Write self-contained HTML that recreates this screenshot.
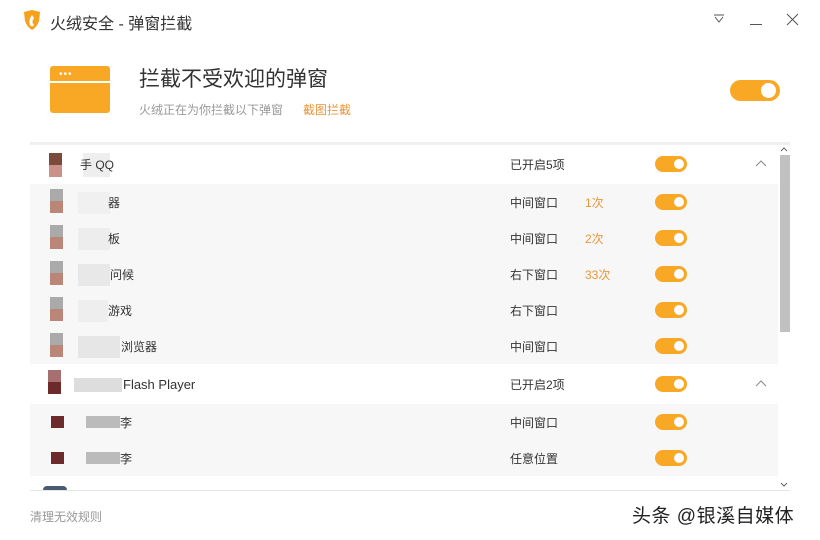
<!DOCTYPE html>
<html><head><meta charset="utf-8"><style>
*{margin:0;padding:0;box-sizing:border-box}
body{width:820px;height:540px;background:#fff;font-family:"Liberation Sans","Noto Sans CJK SC",sans-serif;position:relative;overflow:hidden;color:#333}
.a{position:absolute}
.tg{position:absolute;left:655px;width:32px;height:16px;border-radius:8px;background:#f9a825}
.tg::after{content:"";position:absolute;right:3px;top:3px;width:10px;height:10px;border-radius:50%;background:#fff}
.row{position:absolute;left:30px;width:748px;height:36px}
.sub{background:#f7f7f7}
.t{position:absolute;font-size:12px;line-height:14px}
.c{color:#e8963a}
.px{position:absolute;width:13px;height:12px}
</style></head><body>
<svg class="a" style="left:22px;top:9px" width="20" height="22" viewBox="0 0 20 22"><path d="M2 3 L10 1 L18 3 L17 12 Q15 18 10 21 Q5 18 3 12 Z" fill="#f7a01a"/><path d="M10 6 Q6 11 8 16 Q10 19 12 16 Q9 13 12 9 Z" fill="#fff"/></svg>
<div class="a" style="left:50px;top:10px;font-size:16px;color:#333">火绒安全 - 弹窗拦截</div>
<svg class="a" style="left:712px;top:12px" width="14" height="12"><path d="M2 3h10M3 5l4 5 4-5" stroke="#555" fill="none"/></svg>
<div class="a" style="left:750px;top:24px;width:12px;height:1px;background:#555"></div>
<svg class="a" style="left:786px;top:13px" width="13" height="13"><path d="M1 1l11 11M12 1L1 12" stroke="#555"/></svg>
<div class="a" style="left:50px;top:66px;width:60px;height:47px;background:#f9a825;border-radius:3px"></div>
<div class="a" style="left:50px;top:81px;width:60px;height:2px;background:#fff"></div>
<div class="a" style="left:59px;top:72px;color:#fff;font-size:10px;letter-spacing:1px;line-height:6px">•••</div>
<div class="a" style="left:139px;top:63px;font-size:21px;color:#333">拦截不受欢迎的弹窗</div>
<div class="a" style="left:139px;top:101px;font-size:12px;color:#999">火绒正在为你拦截以下弹窗</div>
<div class="a" style="left:303px;top:101px;font-size:12px;color:#e8963a">截图拦截</div>
<div class="a" style="left:730px;top:80px;width:50px;height:21px;border-radius:11px;background:#f9a825"></div>
<div class="a" style="left:761px;top:83px;width:15px;height:15px;border-radius:50%;background:#fff"></div>
<div class="a" style="left:30px;top:142px;width:760px;height:3px;background:#efefef"></div>

<div class="row" style="top:146px"></div>
<div class="row sub" style="top:184px"></div>
<div class="row sub" style="top:220px"></div>
<div class="row sub" style="top:256px"></div>
<div class="row sub" style="top:292px"></div>
<div class="row sub" style="top:328px"></div>
<div class="row sub" style="top:404px"></div>
<div class="row sub" style="top:440px"></div>
<div class="a" style="left:30px;top:490px;width:760px;height:1px;background:#e6e6e6"></div>

<div class="px" style="left:49px;top:153px;background:#7a4a3a"></div><div class="px" style="left:49px;top:165px;background:#c9918a"></div>
<div class="a" style="left:83px;top:153px;width:27px;height:24px;background:#eee"></div>
<div class="px" style="left:50px;top:189px;background:#aaa"></div><div class="px" style="left:50px;top:201px;background:#b98678"></div><div class="a" style="left:78px;top:192px;width:32px;height:22px;background:#f0f0f0"></div>
<div class="px" style="left:50px;top:225px;background:#aaa"></div><div class="px" style="left:50px;top:237px;background:#b98678"></div><div class="a" style="left:78px;top:228px;width:32px;height:22px;background:#ededed"></div>
<div class="px" style="left:50px;top:261px;background:#aaa"></div><div class="px" style="left:50px;top:273px;background:#b98678"></div><div class="a" style="left:78px;top:264px;width:32px;height:22px;background:#e8e8e8"></div>
<div class="px" style="left:50px;top:297px;background:#aaa"></div><div class="px" style="left:50px;top:309px;background:#b98678"></div><div class="a" style="left:78px;top:300px;width:30px;height:22px;background:#eee"></div>
<div class="px" style="left:50px;top:333px;background:#aaa"></div><div class="px" style="left:50px;top:345px;background:#b98678"></div><div class="a" style="left:78px;top:336px;width:42px;height:22px;background:#e6e6e6"></div>
<div class="px" style="left:48px;top:370px;background:#a77070"></div><div class="px" style="left:48px;top:382px;background:#6d2a2a"></div><div class="a" style="left:74px;top:378px;width:48px;height:14px;background:#ddd"></div>
<div class="px" style="left:51px;top:416px;background:#6d2a2a"></div><div class="a" style="left:86px;top:416px;width:34px;height:12px;background:#bbb"></div>
<div class="px" style="left:51px;top:452px;background:#6d2a2a"></div><div class="a" style="left:86px;top:452px;width:34px;height:12px;background:#bbb"></div>
<div class="a" style="left:43px;top:486px;width:24px;height:4px;border-radius:12px 12px 0 0;background:#4a5a70"></div>

<div class="t" style="left:80px;top:158px">手 QQ</div>
<div class="t" style="left:108px;top:196px">器</div>
<div class="t" style="left:108px;top:232px">板</div>
<div class="t" style="left:110px;top:268px">问候</div>
<div class="t" style="left:108px;top:304px">游戏</div>
<div class="t" style="left:121px;top:340px">浏览器</div>
<div class="t" style="left:123px;top:378px;font-size:13px">Flash Player</div>
<div class="t" style="left:120px;top:416px">李</div>
<div class="t" style="left:120px;top:452px">李</div>

<div class="t" style="left:510px;top:158px">已开启5项</div>
<div class="t" style="left:510px;top:196px">中间窗口</div><div class="t c" style="left:585px;top:196px">1次</div>
<div class="t" style="left:510px;top:232px">中间窗口</div><div class="t c" style="left:585px;top:232px">2次</div>
<div class="t" style="left:510px;top:268px">右下窗口</div><div class="t c" style="left:585px;top:268px">33次</div>
<div class="t" style="left:510px;top:304px">右下窗口</div>
<div class="t" style="left:510px;top:340px">中间窗口</div>
<div class="t" style="left:510px;top:378px">已开启2项</div>
<div class="t" style="left:510px;top:416px">中间窗口</div>
<div class="t" style="left:510px;top:452px">任意位置</div>

<div class="tg" style="top:156px"></div><div class="tg" style="top:194px"></div><div class="tg" style="top:230px"></div><div class="tg" style="top:266px"></div><div class="tg" style="top:302px"></div><div class="tg" style="top:338px"></div><div class="tg" style="top:376px"></div><div class="tg" style="top:414px"></div><div class="tg" style="top:450px"></div>
<svg class="a" style="left:755px;top:159px" width="12" height="8"><path d="M1 7l5-5 5 5" stroke="#888" fill="none"/></svg>
<svg class="a" style="left:755px;top:379px" width="12" height="8"><path d="M1 7l5-5 5 5" stroke="#888" fill="none"/></svg>
<svg class="a" style="left:780px;top:146px" width="8" height="6"><path d="M1 5l3-3 3 3" stroke="#666" fill="none"/></svg>
<div class="a" style="left:780px;top:155px;width:10px;height:177px;background:#c1c1c1"></div>
<svg class="a" style="left:780px;top:482px" width="8" height="6"><path d="M1 1l3 3 3-3" stroke="#666" fill="none"/></svg>
<div class="a" style="left:30px;top:508px;font-size:12px;color:#999">清理无效规则</div>
<div class="a" style="left:632px;top:501px;font-size:19px;letter-spacing:0.5px;color:#222;text-shadow:0 0 2px #fff">头条 @银溪自媒体</div>
</body></html>
